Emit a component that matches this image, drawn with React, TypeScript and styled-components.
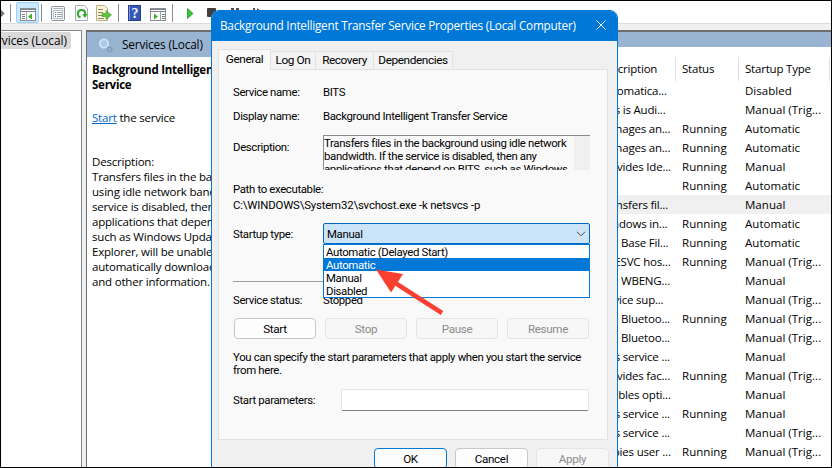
import React from "react";
import styled, { createGlobalStyle, css } from "styled-components";

const Global = createGlobalStyle`
  * { box-sizing: border-box; }
  body { margin: 0; background: #000; overflow: hidden; }
`;

const Screen = styled.div`
  position: relative;
  width: 832px;
  height: 468px;
  border: 1px solid #000;
  background: #f0f0f0;
  overflow: hidden;
  display: flex;
  flex-direction: column;
  font-family: "Open Sans", "Noto Sans", sans-serif;
  font-size: 11.5px;
  letter-spacing: -0.2px;
  color: #000;
  white-space: nowrap;
`;

const Toolbar = styled.div`
  flex: none;
  height: 23px;
  background: #fff;
  border-bottom: 1px solid #dcdcdc;
`;

const ToolbarSvg = styled.svg`
  display: block;
`;

const Workspace = styled.div`
  flex: 1;
  min-height: 0;
  margin-top: 6px;
  display: flex;
  gap: 4px;
`;

const TreePane = styled.div`
  flex: none;
  width: 81px;
  background: #fff;
  border-top: 1px solid #828790;
  border-right: 1px solid #828790;
  overflow: hidden;
`;

const TreeItem = styled.div`
  width: 70px;
  height: 17px;
  margin-top: 1px;
  display: flex;
  align-items: center;
  justify-content: flex-end;
  padding: 0 4px 1px 0;
  background: #d9d9d9;
  border-radius: 0 2px 2px 0;
  font-size: 11.8px;
  letter-spacing: 0;
`;

const ResultPane = styled.div`
  flex: 1;
  min-width: 0;
  display: flex;
  background: #fff;
  border-top: 2px solid #6d6d6d;
  border-left: 1px solid #6d6d6d;
  overflow: hidden;
`;

const Extended = styled.div`
  flex: none;
  width: 510px;
`;

const ExtendedHeader = styled.div`
  height: 25px;
  background: #99b4d1;
  display: flex;
  align-items: center;
  gap: 9px;
  padding: 0 0 1px 10px;
  font-size: 11.8px;
  letter-spacing: -0.15px;
`;

const ExtendedBody = styled.div`
  padding: 5px 0 0 5px;
  line-height: 15px;
`;

const ServiceTitle = styled.div`
  font-weight: 700;
  letter-spacing: -0.25px;
`;

const ActionLine = styled.div`
  margin-top: 18px;
`;

const Link = styled.span`
  color: #0066cc;
  text-decoration: underline;
`;

const Description = styled.div`
  margin-top: 29px;
`;

const List = styled.div`
  flex: 1;
  min-width: 0;
  display: flex;
  flex-direction: column;
`;

const ListBand = styled.div`
  flex: none;
  height: 15px;
  background: #99b4d1;
`;

const grid = css`
  display: grid;
  grid-template-columns: 79px 63px 91px 1fr;
`;

const ListHeader = styled.div`
  ${grid}
  flex: none;
  height: 24px;
  margin: 10px 0 0;
`;

const HeaderCell = styled.div<{ $first?: boolean }>`
  display: flex;
  align-items: center;
  padding: 0 0 1px ${(p) => (p.$first ? 1 : 6)}px;
  border-right: 1px solid #e0e0e0;
`;

const Row = styled.div<{ $active?: boolean }>`
  ${grid}
  flex: none;
  height: 19px;
  line-height: 19px;
  background: ${(p) => (p.$active ? "#f0f0f0" : "#fff")};
`;

const Cell = styled.div<{ $first?: boolean }>`
  padding-left: ${(p) => (p.$first ? 2 : 6)}px;
  letter-spacing: ${(p) => (p.$first ? -0.2 : 0.03)}px;
`;

const Dialog = styled.div`
  position: absolute;
  left: 210px;
  top: 9px;
  width: 407px;
  height: 480px;
  border: 1px solid #0078d7;
  border-radius: 8px 8px 0 0;
  background: #f0f0f0;
  overflow: hidden;
  display: flex;
  flex-direction: column;
  font-family: Roboto, "Liberation Sans", sans-serif;
`;

const TitleBar = styled.div`
  flex: none;
  height: 30px;
  background: #0078d7;
  color: #fff;
  display: flex;
  align-items: center;
  justify-content: space-between;
  padding: 0 11px 2px 8px;
  font-family: "Open Sans", "Noto Sans", sans-serif;
  font-size: 11.8px;
  letter-spacing: -0.25px;
`;

const Tabs = styled.div`
  flex: none;
  display: flex;
  align-items: flex-end;
  height: 28px;
  padding-left: 6px;
`;

const Tab = styled.div<{ $w: number; $active?: boolean }>`
  width: ${(p) => p.$w}px;
  height: ${(p) => (p.$active ? 21 : 18)}px;
  display: flex;
  align-items: center;
  justify-content: center;
  padding: 0 0 ${(p) => (p.$active ? 3 : 1)}px;
  border: 1px solid #e2e2e2;
  border-bottom: 0;
  border-left-width: ${(p) => (p.$active ? 1 : 0)}px;
  background: ${(p) => (p.$active ? "#f9f9f9" : "#f3f3f3")};
  margin-bottom: ${(p) => (p.$active ? -1 : 0)}px;
  z-index: ${(p) => (p.$active ? 1 : 0)};
  font-size: 11.8px;
  letter-spacing: -0.4px;
`;

const Page = styled.div`
  flex: none;
  width: 390px;
  height: 371px;
  margin-left: 6px;
  border: 1px solid #e2e2e2;
  background: #f9f9f9;
  padding: 14px 17px 0 14px;
  font-size: 11.4px;
  letter-spacing: -0.35px;
`;

const Field = styled.div<{ $h: number; $mt?: number }>`
  display: grid;
  grid-template-columns: 90px 1fr;
  align-items: center;
  height: ${(p) => p.$h}px;
  margin-top: ${(p) => p.$mt ?? 0}px;
`;

const TopLabel = styled.span`
  align-self: start;
  padding-top: 5px;
`;

const DescBox = styled.div`
  height: 35px;
  border-top: 1px solid #8a8a8a;
  border-left: 1px solid #8a8a8a;
  display: flex;
  overflow: hidden;
`;

const DescText = styled.div`
  flex: 1;
  line-height: 13px;
  padding: 1px 0 0;
`;

const ScrollTrack = styled.div`
  flex: none;
  width: 16px;
  background: #f0f0f0;
`;

const PathBlock = styled.div`
  margin-top: 11px;
  line-height: 16px;
`;

const PathValue = styled.div`
  letter-spacing: -0.17px;
`;

const Combo = styled.div`
  position: relative;
  width: 267px;
  height: 21px;
  border: 1px solid #0067c0;
  border-radius: 2px;
  background: #cce4f7;
  display: flex;
  align-items: center;
  justify-content: space-between;
  padding: 0 3px;
`;

const Menu = styled.div`
  position: absolute;
  left: -1px;
  top: 20px;
  width: 267px;
  height: 54px;
  border: 1px solid #0078d7;
  background: #fff;
  z-index: 2;
`;

const Option = styled.div<{ $active?: boolean }>`
  height: 13px;
  line-height: 14px;
  padding-left: 2px;
  color: ${(p) => (p.$active ? "#fff" : "#000")};
  background: ${(p) => (p.$active ? "#0078d7" : "transparent")};
`;

const Divider = styled.div`
  height: 1px;
  width: 357px;
  margin-top: 37px;
  background: #a0a0a0;
`;

const Buttons = styled.div`
  display: grid;
  grid-template-columns: repeat(4, 82px);
  column-gap: 9px;
  margin: 10px 0 0 1px;
`;

const Button = styled.div<{ $disabled?: boolean; $primary?: boolean }>`
  height: 21px;
  display: flex;
  align-items: center;
  justify-content: center;
  font-size: 11.6px;
  letter-spacing: -0.3px;
  border-radius: 4px;
  border: 1px solid ${(p) => (p.$primary ? "#0078d4" : p.$disabled ? "#e4e4e4" : "#c8c8c8")};
  background: ${(p) => (p.$disabled ? "#f7f7f7" : "#fdfdfd")};
  color: ${(p) => (p.$disabled ? "#8b8b8b" : "#000")};
`;

const Hint = styled.div`
  margin-top: 12px;
  line-height: 13px;
`;

const ParamRow = styled.div`
  display: grid;
  grid-template-columns: 108px 248px;
  align-items: center;
  margin-top: 12px;
`;

const Input = styled.div`
  height: 22px;
  background: #fff;
  border: 1px solid #e4e4e4;
  border-bottom-color: #808080;
  border-radius: 2px;
`;

const Footer = styled.div`
  display: grid;
  grid-template-columns: repeat(3, 73px);
  column-gap: 8px;
  margin: 8px 0 0 162px;
`;

const Pointer = styled.svg`
  position: absolute;
  left: 374px;
  top: 266px;
  z-index: 3;
`;

const rows: [string, string, string][] = [
  ["Automatica...", "", "Disabled"],
  ["This is Audi...", "", "Manual (Trig..."],
  ["Manages an...", "Running", "Automatic"],
  ["Manages an...", "Running", "Automatic"],
  ["Provides Ide...", "Running", "Manual"],
  ["", "Running", "Automatic"],
  ["Transfers fil...", "", "Manual"],
  ["Windows in...", "Running", "Automatic"],
  ["The Base Fil...", "Running", "Automatic"],
  ["BDESVC hos...", "Running", "Manual (Trig..."],
  ["The WBENG...", "", "Manual"],
  ["Device sup...", "", "Manual (Trig..."],
  ["The Bluetoo...", "Running", "Manual (Trig..."],
  ["The Bluetoo...", "", "Manual (Trig..."],
  ["This service ...", "", "Manual"],
  ["Provides fac...", "Running", "Manual (Trig..."],
  ["Enables opti...", "", "Manual"],
  ["This service ...", "Running", "Manual"],
  ["This service ...", "", "Manual (Trig..."],
  ["Copies user ...", "Running", "Manual (Trig..."],
  ["Enables inf...", "", "Manual (Trig..."],
];

const ToolbarIcons = () => (
  <ToolbarSvg width="270" height="22" viewBox="1 1 270 22">
    <path d="M0 9.5 4 13.5 0 17.5z" fill="#777" stroke="#333" strokeWidth=".7" />
    {[10.5, 41.5, 118.5, 172.5].map((x) => (
      <path key={x} d={`M${x} 4V22`} stroke="#8d8d8d" />
    ))}
    <rect x="16.5" y="2.5" width="22" height="20" rx="1.5" fill="#cce8ff" stroke="#99d1ff" />
    <g>
      <rect x="20.5" y="8.5" width="15" height="12" fill="#fff" stroke="#8a8f98" />
      <path d="M20 9.5h16M20 11.5h16" stroke="#7b828c" />
      <path d="M26.5 12v8" stroke="#9aa" />
      <path d="M22 14.5h3M22 16.5h3M22 18.5h3" stroke="#7b828c" />
      <path d="M32 13.5v6L28 16.5z" fill="#3fae2a" />
    </g>
    <g>
      <rect x="51.5" y="6.5" width="13" height="14" rx="1" fill="#f4f7fa" stroke="#8b939c" />
      <path d="M53 8.5h10" stroke="#a9b4c0" />
      <rect x="53.5" y="10.5" width="9" height="8" fill="#fff" stroke="#b9c0c8" />
      <path d="M55 12.5h1M55 14.5h1M55 16.5h1" stroke="#3d75b5" />
      <path d="M57 12.5h5M57 14.5h5M57 16.5h5" stroke="#9aa3ad" />
    </g>
    <g>
      <path d="M75.5 5.5h9l3 3v12h-12z" fill="#f5f8fa" stroke="#a9b0b8" />
      <path d="M80.5 17.3A3.7 3.7 0 1 1 85.2 14" fill="none" stroke="#37a52c" strokeWidth="2" />
      <path d="M82.3 14h5.2l-2.6 4z" fill="#37a52c" />
    </g>
    <g>
      <path d="M96.5 5.5h8l3 3v12h-11z" fill="#fdf6d6" stroke="#b7ae8c" />
      <path d="M98 9.5h5M98 12.5h5M98 15.5h4M98 18.5h6" stroke="#8b8870" />
      <path d="M102 13.5h4v-3l5.5 4.5-5.5 4.5v-3h-4z" fill="#62c043" stroke="#3c9a2a" strokeWidth=".6" />
    </g>
    <g>
      <rect x="128.5" y="5.5" width="12" height="15" fill="#3558b8" stroke="#27418e" />
      <path d="M129.5 6v14" stroke="#7e97dc" />
      <text x="131.5" y="18.2" fontFamily="Liberation Serif, serif" fontSize="14" fontWeight="700" fill="#fff" letterSpacing="0">?</text>
    </g>
    <g>
      <rect x="150.5" y="8.5" width="15" height="12" fill="#fff" stroke="#8a8f98" />
      <path d="M150 9.5h16M150 11.5h16" stroke="#7b828c" />
      <path d="M160.5 12v8" stroke="#9aa" />
      <path d="M162 14.5h3M162 16.5h3M162 18.5h3" stroke="#7b828c" />
      <path d="M154 13.5v6l4-3z" fill="#3fae2a" />
    </g>
    <path d="M187.5 8.5v10l5.5-5z" fill="#35c52f" stroke="#1f9d1f" strokeWidth=".8" />
    <rect x="207" y="8" width="9" height="9" rx="1" fill="#404040" />
    <path d="M231 8h3v8h-3zM236 8h3v8h-3zM253 8h2v8h-2zM257 8l5 4-5 4z" fill="#505050" />
  </ToolbarSvg>
);

const GearIcon = () => (
  <svg width="16" height="17" viewBox="0 0 16 17">
    <circle cx="7" cy="7.5" r="4.3" fill="#a9cbe6" stroke="#c9e2f3" strokeWidth="2.2" />
    <circle cx="7" cy="7.5" r="5.6" fill="none" stroke="#7fa3c4" strokeWidth=".7" strokeDasharray="1.5 1" />
    <circle cx="12.5" cy="13.5" r="2.2" fill="none" stroke="#7894ab" strokeWidth="1.6" strokeDasharray="1.2 .7" />
  </svg>
);

export default function App() {
  return (
    <>
      <Global />
      <Screen>
        <Toolbar>
          <ToolbarIcons />
        </Toolbar>
        <Workspace>
          <TreePane>
            <TreeItem>Services (Local)</TreeItem>
          </TreePane>
          <ResultPane>
            <Extended>
              <ExtendedHeader>
                <GearIcon />
                Services (Local)
              </ExtendedHeader>
              <ExtendedBody>
                <ServiceTitle>
                  Background Intelligent Transfer
                  <br />
                  Service
                </ServiceTitle>
                <ActionLine>
                  <Link>Start</Link> the service
                </ActionLine>
                <Description>
                  Description:
                  <br />
                  Transfers files in the background
                  <br />
                  using idle network bandwidth. If the
                  <br />
                  service is disabled, then any
                  <br />
                  applications that depend on BITS,
                  <br />
                  such as Windows Update or MSN
                  <br />
                  Explorer, will be unable to
                  <br />
                  automatically download programs
                  <br />
                  and other information.
                </Description>
              </ExtendedBody>
            </Extended>
            <List>
              <ListBand />
              <ListHeader>
                <HeaderCell $first>Description</HeaderCell>
                <HeaderCell>Status</HeaderCell>
                <HeaderCell>Startup Type</HeaderCell>
              </ListHeader>
              {rows.map(([d, s, t], i) => (
                <Row key={i} $active={i === 6}>
                  <Cell $first>{d}</Cell>
                  <Cell>{s}</Cell>
                  <Cell>{t}</Cell>
                </Row>
              ))}
            </List>
          </ResultPane>
        </Workspace>

        <Dialog>
          <TitleBar>
            Background Intelligent Transfer Service Properties (Local Computer)
            <svg width="10" height="10" viewBox="0 0 10 10">
              <path d="M.5.5l9 9M9.5.5l-9 9" stroke="#fff" strokeWidth="1" />
            </svg>
          </TitleBar>
          <Tabs>
            <Tab $w={53} $active>General</Tab>
            <Tab $w={45}>Log On</Tab>
            <Tab $w={58}>Recovery</Tab>
            <Tab $w={79}>Dependencies</Tab>
          </Tabs>
          <Page>
            <Field $h={16}>
              <span>Service name:</span>
              <span>BITS</span>
            </Field>
            <Field $h={16} $mt={8}>
              <span>Display name:</span>
              <span>Background Intelligent Transfer Service</span>
            </Field>
            <Field $h={35} $mt={11}>
              <TopLabel>Description:</TopLabel>
              <DescBox>
                <DescText>
                  Transfers files in the background using idle network
                  <br />
                  bandwidth. If the service is disabled, then any
                  <br />
                  applications that depend on BITS, such as Windows
                </DescText>
                <ScrollTrack />
              </DescBox>
            </Field>
            <PathBlock>
              Path to executable:
              <PathValue>C:\WINDOWS\System32\svchost.exe -k netsvcs -p</PathValue>
            </PathBlock>
            <Field $h={21} $mt={10}>
              <span>Startup type:</span>
              <Combo>
                Manual
                <svg width="10" height="6" viewBox="0 0 10 6">
                  <path d="M1 .8l4 4 4-4" fill="none" stroke="#444" />
                </svg>
                <Menu>
                  <Option>Automatic (Delayed Start)</Option>
                  <Option $active>Automatic</Option>
                  <Option>Manual</Option>
                  <Option>Disabled</Option>
                </Menu>
              </Combo>
            </Field>
            <Divider />
            <Field $h={16} $mt={10}>
              <span>Service status:</span>
              <span>Stopped</span>
            </Field>
            <Buttons>
              <Button>Start</Button>
              <Button $disabled>Stop</Button>
              <Button $disabled>Pause</Button>
              <Button $disabled>Resume</Button>
            </Buttons>
            <Hint>
              You can specify the start parameters that apply when you start the service
              <br />
              from here.
            </Hint>
            <ParamRow>
              <span>Start parameters:</span>
              <Input />
            </ParamRow>
          </Page>
          <Footer>
            <Button $primary>OK</Button>
            <Button>Cancel</Button>
            <Button $disabled>Apply</Button>
          </Footer>
        </Dialog>

        <Pointer width="72" height="52" viewBox="375 267 72 52">
          <path d="M396 283.5 442 313" stroke="#fb4032" strokeWidth="4.5" />
          <path d="M376 269.5 403 274 391 292.5z" fill="#fb4032" />
        </Pointer>
      </Screen>
    </>
  );
}
